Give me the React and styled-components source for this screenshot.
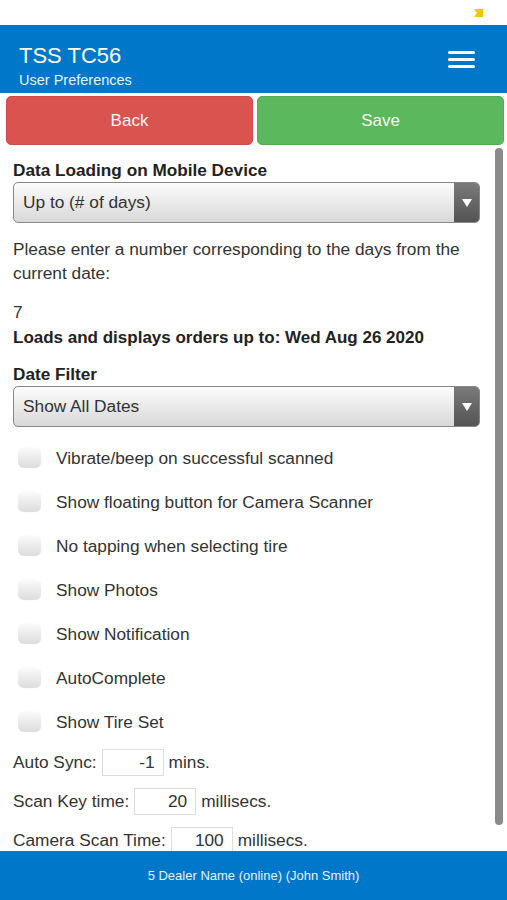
import * as React from 'react';
import styled, { createGlobalStyle } from 'styled-components';

const GlobalStyle = createGlobalStyle`
    html, body {
        margin: 0;
        padding: 0;
        background: #fff;
    }
    body {
        font-family: "Liberation Sans", Arial, sans-serif;
        color: #333;
    }
`;

const Page = styled.div`
    width: 507px;
    height: 900px;
    display: flex;
    flex-direction: column;
    overflow: hidden;
`;

const StatusBar = styled.div`
    height: 25px;
    display: flex;
    justify-content: flex-end;
    align-items: center;
    padding-right: 23px;
    box-sizing: border-box;
`;

const Header = styled.header`
    height: 68px;
    box-sizing: border-box;
    background: #0077c8;
    color: #fff;
    display: flex;
    align-items: flex-start;
    justify-content: space-between;
    padding: 18px 32px 0 19px;
`;

const TitleBlock = styled.div`
    display: flex;
    flex-direction: column;
    gap: 2px;
`;

const Title = styled.div`
    font-size: 22px;
    line-height: 26px;
`;

const Subtitle = styled.div`
    font-size: 14.5px;
    line-height: 18px;
    color: #e8f2fb;
`;

const MenuButton = styled.div`
    width: 27px;
    display: flex;
    flex-direction: column;
    gap: 4px;
    margin-top: 8px;
    span {
        display: block;
        height: 3px;
        border-radius: 2px;
        background: #fff;
    }
`;

const ActionBar = styled.div`
    display: flex;
    gap: 4px;
    padding: 3px 3px 3px 6px;
`;

const ActionButton = styled.button`
    flex: 1;
    height: 49px;
    border: 1px solid ${p => (p.$tone === 'danger' ? '#cf4a46' : '#52ad52')};
    border-radius: 5px;
    background: ${p => (p.$tone === 'danger' ? '#d9534f' : '#5cb85c')};
    color: #f4f4f4;
    font-family: inherit;
    font-size: 17px;
    padding: 1px 0 0;
`;

const Body = styled.div`
    flex: 1;
    display: flex;
    min-height: 0;
`;

const Content = styled.div`
    flex: 1;
    padding: 11px 0 0 13px;
    overflow: hidden;
`;

const ScrollTrack = styled.div`
    width: 27px;
    display: flex;
    justify-content: flex-start;
    padding-left: 15px;
    box-sizing: border-box;
`;

const ScrollThumb = styled.div`
    width: 8px;
    height: 677px;
    border-radius: 4px;
    background: #8a8a8a;
`;

const Label = styled.div`
    font-size: 17.2px;
    font-weight: bold;
    line-height: 22px;
    color: #222;
    margin-top: ${p => p.$top || 0}px;
`;

const Select = styled.div`
    height: 41px;
    box-sizing: border-box;
    border: 1px solid #888;
    border-radius: 5px;
    display: flex;
    overflow: hidden;
    background: linear-gradient(#fcfcfc, #d8d8d8);
    margin-top: ${p => p.$top || 0}px;
`;

const SelectText = styled.div`
    flex: 1;
    padding-left: 9px;
    display: flex;
    align-items: center;
    font-size: 17.3px;
    color: #333;
`;

const SelectArrow = styled.div`
    width: 25px;
    background: linear-gradient(#7a7a7a, #545454);
    display: flex;
    align-items: center;
    justify-content: center;
    &:after {
        content: "";
        border-left: 5px solid transparent;
        border-right: 5px solid transparent;
        border-top: 8px solid #fff;
    }
`;

const Text = styled.div`
    font-size: ${p => (p.$bold ? 17 : 17.3)}px;
    line-height: ${p => (p.$bold ? 26 : 24)}px;
    color: ${p => (p.$bold ? '#222' : '#333')};
    margin-top: ${p => p.$top || 0}px;
    font-weight: ${p => (p.$bold ? 'bold' : 'normal')};
`;

const Checks = styled.div`
    margin-top: 9px;
    display: flex;
    flex-direction: column;
`;

const CheckRow = styled.label`
    height: 44px;
    display: flex;
    align-items: center;
    font-size: 17.3px;
    color: #333;
`;

const Box = styled.span`
    width: 23px;
    height: 20px;
    margin: 0 15px 0 5px;
    border-radius: 6px;
    background: linear-gradient(#fafafa, #dcdcdc);
    box-shadow: 0 0 1px rgba(0, 0, 0, 0.15);
`;

const Fields = styled.div`
    margin-top: 5px;
    display: flex;
    flex-direction: column;
    gap: 12px;
`;

const FieldRow = styled.div`
    display: flex;
    align-items: center;
    gap: 5px;
    height: 27px;
    font-size: 17.3px;
    color: #333;
    white-space: nowrap;
`;

const NumberBox = styled.div`
    width: 62px;
    height: 27px;
    box-sizing: border-box;
    border: 1px solid #ddd;
    text-align: right;
    padding-right: 8px;
    line-height: 25px;
    font-size: 17.3px;
`;

const Footer = styled.footer`
    height: 49px;
    background: #0077c8;
    color: #e6f1fa;
    font-size: 13px;
    display: flex;
    align-items: center;
    justify-content: center;
`;

const checks = [
    'Vibrate/beep on successful scanned',
    'Show floating button for Camera Scanner',
    'No tapping when selecting tire',
    'Show Photos',
    'Show Notification',
    'AutoComplete',
    'Show Tire Set',
];

const fields = [
    { label: 'Auto Sync:', value: '-1', unit: 'mins.' },
    { label: 'Scan Key time:', value: '20', unit: 'millisecs.' },
    { label: 'Camera Scan Time:', value: '100', unit: 'millisecs.' },
];

export default () => (
    <Page>
        <GlobalStyle />
        <StatusBar>
            <svg width="11" height="10" viewBox="0 0 11 10">
                <path d="M1 1 H10 V9 H1 L4 5 Z" fill="#f5c400" />
            </svg>
        </StatusBar>
        <Header>
            <TitleBlock>
                <Title>TSS TC56</Title>
                <Subtitle>User Preferences</Subtitle>
            </TitleBlock>
            <MenuButton><span /><span /><span /></MenuButton>
        </Header>
        <ActionBar>
            <ActionButton $tone="danger">Back</ActionButton>
            <ActionButton $tone="success">Save</ActionButton>
        </ActionBar>
        <Body>
            <Content>
                <Label>Data Loading on Mobile Device</Label>
                <Select $top={1}>
                    <SelectText>Up to (# of days)</SelectText>
                    <SelectArrow />
                </Select>
                <Text $top={14}>Please enter a number corresponding to the days from the current date:</Text>
                <Text $top={15}>7</Text>
                <Text $bold $top={1}>Loads and displays orders up to: Wed Aug 26 2020</Text>
                <Label $top={12}>Date Filter</Label>
                <Select $top={1}>
                    <SelectText>Show All Dates</SelectText>
                    <SelectArrow />
                </Select>
                <Checks>
                    {checks.map(c => (
                        <CheckRow key={c}><Box />{c}</CheckRow>
                    ))}
                </Checks>
                <Fields>
                    {fields.map(f => (
                        <FieldRow key={f.label}>
                            {f.label}
                            <NumberBox>{f.value}</NumberBox>
                            {f.unit}
                        </FieldRow>
                    ))}
                </Fields>
            </Content>
            <ScrollTrack><ScrollThumb /></ScrollTrack>
        </Body>
        <Footer>5 Dealer Name (online) (John Smith)</Footer>
    </Page>
);
